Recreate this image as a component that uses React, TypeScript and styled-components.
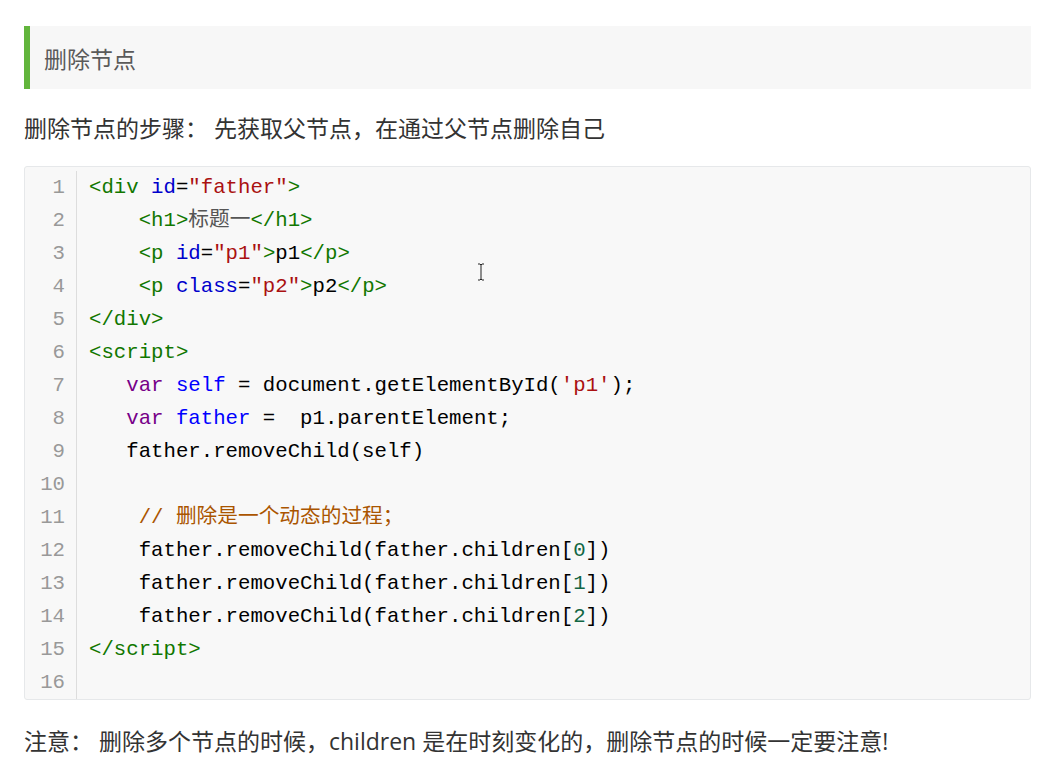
import { Fragment } from "react";
import styled, { createGlobalStyle } from "styled-components";

const Global = createGlobalStyle`
	html, body {
		margin: 0;
		padding: 0;
		background: #ffffff;
	}
`;

const Pagina = styled.main`
	width: 1007px;
	padding: 26px 0 0 24px;
	font-family: "Open Sans", "Noto Sans CJK SC", sans-serif;
	color: #333333;
`;

const Titulo = styled.h3`
	margin: 0;
	height: 63px;
	display: flex;
	align-items: center;
	box-sizing: border-box;
	padding-left: 14px;
	border-left: 6px solid #62b53c;
	background: #f7f7f7;
	font-size: 23px;
	font-weight: 400;
	color: #5a5a5a;
`;

const Texto = styled.p<{ $top: number }>`
	margin: ${(p) => p.$top}px 0 0;
	font-size: 23px;
	line-height: 36px;
	color: #333333;
	white-space: pre;
`;

const Bloco = styled.div`
	position: relative;
	margin-top: 20px;
	padding: 4px 0 0;
	border: 1px solid #e6e8ea;
	border-radius: 3px;
	background: #f8f8f8;
	font-family: "Liberation Mono", "DejaVu Sans Mono", "Noto Sans CJK SC", monospace;
	font-size: 20.7px;
`;

const Linha = styled.div`
	display: grid;
	grid-template-columns: 52px 1fr;
	height: 33px;
	line-height: 33px;
`;

const Numero = styled.span`
	box-sizing: border-box;
	padding-right: 11px;
	text-align: right;
	border-right: 1px solid #dddddd;
	color: #999999;
`;

const Codigo = styled.span`
	padding-left: 12px;
	white-space: pre;
	color: #000000;
`;

type Tipo = "tag" | "attr" | "str" | "kw" | "def" | "com" | "num" | "txt" | "cjk";

const cores: Record<Tipo, string> = {
	tag: "#117700",
	attr: "#0000cc",
	str: "#aa1111",
	kw: "#770088",
	def: "#0000ff",
	com: "#aa5500",
	num: "#116644",
	txt: "#000000",
	cjk: "#555555",
};

const Tok = styled.span<{ $t: Tipo }>`
	color: ${(p) => cores[p.$t]};
`;

const Cursor = styled.svg`
	position: absolute;
	left: 452px;
	top: 96px;
`;

type Parte = [Tipo, string];

const linhas: Parte[][] = [
	[["tag", "<div"], ["txt", " "], ["attr", "id"], ["txt", "="], ["str", '"father"'], ["tag", ">"]],
	[["txt", "    "], ["tag", "<h1>"], ["cjk", "标题一"], ["tag", "</h1>"]],
	[["txt", "    "], ["tag", "<p"], ["txt", " "], ["attr", "id"], ["txt", "="], ["str", '"p1"'], ["tag", ">"], ["txt", "p1"], ["tag", "</p>"]],
	[["txt", "    "], ["tag", "<p"], ["txt", " "], ["attr", "class"], ["txt", "="], ["str", '"p2"'], ["tag", ">"], ["txt", "p2"], ["tag", "</p>"]],
	[["tag", "</div>"]],
	[["tag", "<script>"]],
	[["txt", "   "], ["kw", "var"], ["txt", " "], ["def", "self"], ["txt", " = document.getElementById("], ["str", "'p1'"], ["txt", ");"]],
	[["txt", "   "], ["kw", "var"], ["txt", " "], ["def", "father"], ["txt", " =  p1.parentElement;"]],
	[["txt", "   father.removeChild(self)"]],
	[],
	[["txt", "    "], ["com", "// 删除是一个动态的过程；"]],
	[["txt", "    father.removeChild(father.children["], ["num", "0"], ["txt", "])"]],
	[["txt", "    father.removeChild(father.children["], ["num", "1"], ["txt", "])"]],
	[["txt", "    father.removeChild(father.children["], ["num", "2"], ["txt", "])"]],
	[["tag", "</script>"]],
	[],
];

export default function App() {
	return (
		<>
			<Global />
			<Pagina>
				<Titulo>删除节点</Titulo>
				<Texto $top={21}>删除节点的步骤： 先获取父节点，在通过父节点删除自己</Texto>

				<Bloco>
					{linhas.map((partes, i) => (
						<Linha key={i}>
							<Numero>{i + 1}</Numero>
							<Codigo>
								{partes.map(([t, s], j) => (
									<Fragment key={j}>
										<Tok $t={t}>{s}</Tok>
									</Fragment>
								))}
							</Codigo>
						</Linha>
					))}
					<Cursor width="8" height="18" viewBox="0 0 8 18">
						<path d="M1 1h2l1 1 1-1h2M4 2v14M1 17h2l1-1 1 1h2" fill="none" stroke="#222" strokeWidth="1" />
					</Cursor>
				</Bloco>

				<Texto $top={23}>注意： 删除多个节点的时候，children 是在时刻变化的，删除节点的时候一定要注意!</Texto>
			</Pagina>
		</>
	);
}
